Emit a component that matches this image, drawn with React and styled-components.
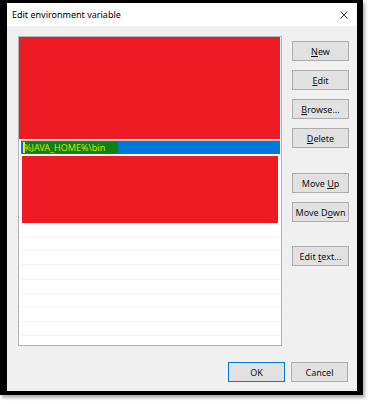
import React from "react";
import styled, { createGlobalStyle } from "styled-components";

const Global = createGlobalStyle`
  html, body { margin: 0; padding: 0; background: #ffffff; }
  body { font-family: "Noto Sans", "Open Sans", sans-serif; }
  #root { width: 368px; height: 404px; }
`;

const Frame = styled.div`
  width: 350px;
  height: 388px;
  border-style: solid;
  border-color: #000;
  border-width: 3px 6px 4px 7px;
  box-shadow: 2px 3px 3px rgba(0, 0, 0, 0.3);
  display: flex;
  flex-direction: column;
  background: #f0f0f0;
`;

const TitleBar = styled.div`
  height: 24px;
  background: #ffffff;
  display: flex;
  align-items: center;
  justify-content: space-between;
  padding: 0 8px 0 5px;
  font-size: 9px;
  color: #000;
`;

const CloseIcon = styled.svg`
  width: 8px;
  height: 8px;
  margin-right: 1px;
`;

const Body = styled.div`
  flex: 1;
  display: flex;
  flex-direction: column;
  padding: 10px 8px 9px 11px;
`;

const Main = styled.div`
  display: flex;
  gap: 10px;
`;

const ListBox = styled.div`
  width: 262px;
  height: 308px;
  border: 1px solid #b4b4b4;
  background: #fff;
  display: flex;
  flex-direction: column;
  overflow: hidden;
`;

const RedBlock = styled.div`
  height: ${(p) => p.$h}px;
  margin: ${(p) => p.$m};
  background: #ed1c24;
  flex-shrink: 0;
`;

const SelectedRow = styled.div`
  height: 13px;
  margin: 1px 1px 0 2px;
  background: #0078d7;
  border-top: 1px solid #c8c8c8;
  display: flex;
  align-items: center;
  padding-left: 2px;
  flex-shrink: 0;
`;

const Highlight = styled.span`
  background: linear-gradient(90deg, #e8e800 0, #e8e800 2px, #0f800f 2px);
  color: #cde21c;
  font-size: 9px;
  line-height: 11px;
  height: 11px;
  padding: 0 13px 0 1px;
  border-radius: 0 2px 2px 0;
  white-space: nowrap;
`;

const EmptyRow = styled.div`
  height: 14.14px;
  box-sizing: border-box;
  border-bottom: 1px solid #f3f3f3;
  flex-shrink: 0;
`;

const Column = styled.div`
  display: flex;
  flex-direction: column;
  padding-top: 5px;
`;

const Button = styled.button`
  width: 57px;
  height: 20px;
  margin-top: ${(p) => p.$gap || 0}px;
  padding: 0;
  background: #e1e1e1;
  border: 1px solid ${(p) => (p.$primary ? "#0078d7" : "#adadad")};
  font-family: "Noto Sans", "Open Sans", sans-serif;
  font-size: 9px;
  color: #111;
  box-sizing: border-box;
  display: flex;
  align-items: center;
  justify-content: center;
  white-space: nowrap;
  u { text-decoration: underline; text-underline-offset: 1px; }
`;

const Footer = styled.div`
  display: flex;
  justify-content: flex-end;
  gap: 6px;
  margin-top: 16px;
  padding-right: 1px;
`;

export default function App() {
  return (
    <>
      <Global />
      <Frame>
        <TitleBar>
          <span>Edit environment variable</span>
          <CloseIcon viewBox="0 0 8 8">
            <path d="M0.5 0.5 L7.5 7.5 M7.5 0.5 L0.5 7.5" stroke="#333" strokeWidth="0.9" fill="none" />
          </CloseIcon>
        </TitleBar>
        <Body>
          <Main>
            <ListBox>
              <RedBlock $h={102} $m="0 1px 0 0" />
              <SelectedRow>
                <Highlight>%JAVA_HOME%\bin</Highlight>
              </SelectedRow>
              <RedBlock $h={67} $m="2px 3px 0 3px" />
              {Array.from({ length: 9 }).map((_, i) => (
                <EmptyRow key={i} />
              ))}
            </ListBox>
            <Column>
              <Button><span><u>N</u>ew</span></Button>
              <Button $gap={9}><span><u>E</u>dit</span></Button>
              <Button $gap={9}><span><u>B</u>rowse...</span></Button>
              <Button $gap={9}><span><u>D</u>elete</span></Button>
              <Button $gap={25}><span>Move <u>U</u>p</span></Button>
              <Button $gap={9}><span>Move D<u>o</u>wn</span></Button>
              <Button $gap={24}><span>Edit <u>t</u>ext...</span></Button>
            </Column>
          </Main>
          <Footer>
            <Button $primary>OK</Button>
            <Button>Cancel</Button>
          </Footer>
        </Body>
      </Frame>
    </>
  );
}
